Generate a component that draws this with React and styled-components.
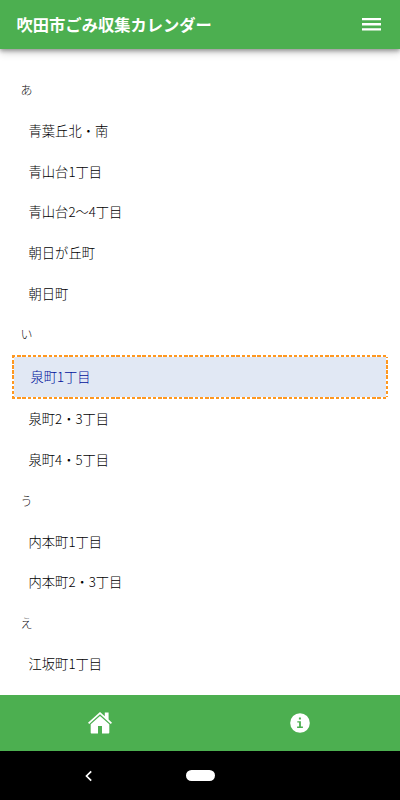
import React from "react";
import styled, { createGlobalStyle } from "styled-components";

const Global = createGlobalStyle`
  *{box-sizing:border-box}
  body{margin:0;background:#fff;overflow:hidden}
`;
const Screen = styled.div`
  width:400px;height:800px;display:flex;flex-direction:column;
  font-family:"Noto Sans CJK JP",sans-serif;font-size:13.28px;color:#000;
`;
const Header = styled.header`
  height:49px;flex:none;background:#4caf50;color:#fff;display:flex;align-items:center;
  justify-content:space-between;padding:0 19px 0 16.5px;
  box-shadow:0 2px 4px rgba(0,0,0,.32),0 4px 8px rgba(0,0,0,.16);z-index:1;
`;
const Title = styled.h1`margin:0;font-size:16.3px;font-weight:700;line-height:24px;padding-bottom:1px;`;
const List = styled.main`flex:1;min-height:0;overflow:hidden;padding:20.75px 12px 0;`;
const Heading = styled.div`
  height:40.75px;line-height:40.75px;padding-left:8.6px;font-size:12px;font-weight:300;color:#111;
`;
const Row = styled.div`
  height:${p => p.$selected ? 44 : 40.75}px;display:flex;align-items:center;
  padding:0 16px 1px ${p => p.$selected ? 18.4 : 16.6}px;
  font-weight:300;
  ${p => p.$selected && `
    color:#00109a;
    background:
      repeating-linear-gradient(90deg,#ff9820 0 3.4px,#fff 3.4px 5.22px) 0 0/100% 2px no-repeat,
      repeating-linear-gradient(90deg,#ff9820 0 3.4px,#fff 3.4px 5.22px) 0 100%/100% 2px no-repeat,
      repeating-linear-gradient(180deg,#ff9820 0 3.4px,#fff 3.4px 5.1px) 0 0/2px 100% no-repeat,
      repeating-linear-gradient(180deg,#ff9820 0 3.4px,#fff 3.4px 5.1px) 100% 0/2px 100% no-repeat,
      #e1e8f4;
  `}
`;
const Tabs = styled.nav`
  height:56px;flex:none;background:#4caf50;color:#fff;display:grid;grid-template-columns:1fr 1fr;
  align-items:center;justify-items:center;
`;
const SystemBar = styled.footer`
  height:49px;flex:none;background:#000;display:flex;align-items:center;padding-left:84px;
`;
const Pill = styled.div`width:29px;height:11px;border-radius:6px;background:#fff;margin-left:93px;`;

const groups = [
  ["あ", ["青葉丘北・南", "青山台1丁目", "青山台2〜4丁目", "朝日が丘町", "朝日町"]],
  ["い", ["泉町1丁目", "泉町2・3丁目", "泉町4・5丁目"]],
  ["う", ["内本町1丁目", "内本町2・3丁目"]],
  ["え", ["江坂町1丁目"]],
];

export default function App() {
  return (
    <Screen>
      <Global />
      <Header>
        <Title>吹田市ごみ収集カレンダー</Title>
        <svg width="19" height="13" viewBox="0 0 19 13" fill="#fff"><path d="M0 0h19v2.3H0zM0 5.1h19v2.3H0zM0 10.3h19v2.3H0z" /></svg>
      </Header>
      <List>
        {groups.map(([h, items]) => (
          <React.Fragment key={h}>
            <Heading>{h}</Heading>
            {items.map(t => <Row key={t} $selected={t === "泉町1丁目"}>{t}</Row>)}
          </React.Fragment>
        ))}
      </List>
      <Tabs>
        <svg width="24" height="24" viewBox="0 0 24 24" fill="#fff">
          <path d="M12 .9 0 11.7l1.2 1.3L12 3.3 22.8 13l1.2-1.3-3.4-3.1V1.5h-3.8v3.7z" />
          <path d="M2.7 13.2 12 4.9l9.3 8.3v8.3c0 .6-.4 1-1 1H14v-7.4h-4v7.4H3.7c-.6 0-1-.4-1-1z" />
        </svg>
        <svg width="20" height="20" viewBox="0 0 20 20"><circle cx="10" cy="10" r="9.8" fill="#fff" /><path d="M8.9 4.4h2v2h-2zM7.3 8.2h3.6v5.3h2v1.4H7.1v-1.4h2V9.6H7.3z" fill="#4caf50" /></svg>
      </Tabs>
      <SystemBar>
        <svg width="9" height="12" viewBox="0 0 9 12" fill="none" stroke="#fff" strokeWidth="1.7"><path d="M7.2 1.3 2.5 6l4.7 4.7" /></svg>
        <Pill />
      </SystemBar>
    </Screen>
  );
}
